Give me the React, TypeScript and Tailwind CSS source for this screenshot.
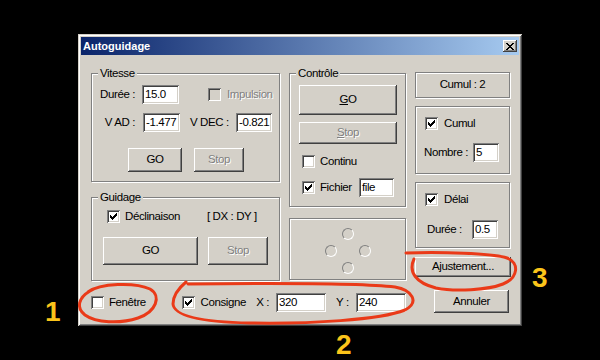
import React from 'react';

// classic win2k bevels
const RAISED =
  'bg-[#d4d0c8] shadow-[inset_-1px_-1px_#404040,inset_1px_1px_#fff,inset_-2px_-2px_#808080,inset_2px_2px_#d4d0c8]';
const SUNKEN = 'shadow-[inset_1px_1px_#808080,inset_-1px_-1px_#fff,inset_2px_2px_#404040,inset_-2px_-2px_#d4d0c8]';
const ETCHED = 'border border-[#808080] shadow-[1px_1px_0_#fff,inset_1px_1px_0_#fff]';
const DISABLED = 'text-[#808080] [text-shadow:1px_1px_0_#fff]';

function Check({ on = false, disabled = false }: { on?: boolean; disabled?: boolean }) {
  return (
    <div className={`w-[13px] h-[13px] shrink-0 ${SUNKEN} ${disabled ? 'bg-[#d4d0c8]' : 'bg-white'}`}>
      {on && (
        <svg width="13" height="13" viewBox="0 0 13 13" shapeRendering="crispEdges">
          <path
            fill="#000"
            d="M9 3h1v1h-1z M8 4h2v1h-2z M3 5h1v1h-1z M7 5h3v1h-3z M3 6h2v1h-2z M6 6h3v1h-3z M3 7h5v1h-5z M4 8h3v1h-3z M5 9h1v1h-1z"
          />
        </svg>
      )}
    </div>
  );
}

function Field({ value, className = '' }: { value: string; className?: string }) {
  return (
    <div className={`h-[19px] shrink-0 bg-white ${SUNKEN} pl-[3px] flex items-center leading-none ${className}`}>
      {value}
    </div>
  );
}

function Btn({
  children,
  className = '',
  disabled = false,
}: {
  children: React.ReactNode;
  className?: string;
  disabled?: boolean;
}) {
  return (
    <div className={`${RAISED} shrink-0 flex items-center justify-center ${disabled ? DISABLED : ''} ${className}`}>
      {children}
    </div>
  );
}

function Group({ label, className = '', children }: { label: string; className?: string; children: React.ReactNode }) {
  return (
    <fieldset className={`${ETCHED} min-w-0 ${className}`}>
      <legend className="ml-[6px] px-[2px] leading-[14px] h-[14px] bg-[#d4d0c8]">{label}</legend>
      {children}
    </fieldset>
  );
}

function Dot() {
  return (
    <span className="w-[12px] h-[12px] rounded-full border border-t-[#808080] border-l-[#808080] border-r-white border-b-white" />
  );
}

export default function App() {
  return (
    <div className="relative w-[600px] h-[360px] bg-black overflow-hidden pt-[34px] pl-[78px] font-['Liberation_Sans',Arial,sans-serif] text-[11.5px] tracking-[-0.4px] text-black">
      {/* Dialog */}
      <div className="w-[444px] h-[292px] p-[3px] bg-[#d4d0c8] flex flex-col shadow-[inset_1px_1px_#d4d0c8,inset_-1px_-1px_#404040,inset_2px_2px_#fff,inset_-2px_-2px_#808080]">
        {/* Title bar */}
        <div className="h-[18px] shrink-0 flex items-center justify-between pl-[2px] pr-[2px] bg-[linear-gradient(to_right,#0a246a,#a6caf0)]">
          <span className="text-white font-bold text-[11px] tracking-normal">Autoguidage</span>
          <Btn className="w-[14px] h-[12px]">
            <svg width="8" height="7" viewBox="0 0 8 7" shapeRendering="crispEdges">
              <path
                fill="#000"
                d="M0 0h2v1h-2z M6 0h2v1h-2z M1 1h2v1h-2z M5 1h2v1h-2z M2 2h4v1h-4z M3 3h2v1h-2z M2 4h4v1h-4z M1 5h2v1h-2z M5 5h2v1h-2z M0 6h2v1h-2z M6 6h2v1h-2z"
              />
            </svg>
          </Btn>
        </div>

        {/* Body */}
        <div className="flex-1 flex pl-[10px] pt-[11px]">
          <div className="flex flex-col w-[315px]">
            <div className="flex items-start">
              {/* Column 1 */}
              <div className="flex flex-col w-[189px]">
                <Group label="Vitesse" className="pb-[9px]">
                  <div className="mt-[5px] h-[19px] flex items-center">
                    <span className="w-[50px] text-right pr-[7px]">Durée :</span>
                    <Field value="15.0" className="w-[37px]" />
                    <div className="ml-[29px]">
                      <Check disabled />
                    </div>
                    <span className={`ml-[6px] ${DISABLED}`}>Impulsion</span>
                  </div>
                  <div className="mt-[9px] h-[19px] flex items-center">
                    <span className="w-[51px] text-right pr-[8px]">V AD :</span>
                    <Field value="-1.477" className="w-[37px]" />
                    <span className="ml-[10px] w-[46px]">V DEC :</span>
                    <Field value="-0.821" className="w-[36px]" />
                  </div>
                  <div className="mt-[16px] flex">
                    <Btn className="ml-[36px] w-[54px] h-[24px]">GO</Btn>
                    <Btn disabled className="ml-[12px] w-[50px] h-[24px]">
                      Stop
                    </Btn>
                  </div>
                </Group>

                <Group label="Guidage" className="mt-[8px] pb-[15px]">
                  <div className="mt-[6px] h-[13px] flex items-center">
                    <div className="ml-[15px]">
                      <Check on />
                    </div>
                    <span className="ml-[5px] w-[82px]">Déclinaison</span>
                    <span>[ DX : DY ]</span>
                  </div>
                  <div className="mt-[14px] flex">
                    <Btn className="ml-[11px] w-[95px] h-[28px]">GO</Btn>
                    <Btn disabled className="ml-[10px] w-[60px] h-[28px]">
                      Stop
                    </Btn>
                  </div>
                </Group>
              </div>

              {/* Column 2 */}
              <div className="ml-[9px] flex flex-col w-[117px]">
                <Group label="Contrôle" className="pb-[9px]">
                  <Btn className="mt-[5px] ml-[9px] w-[98px] h-[30px]">
                    <span>
                      <span className="underline">G</span>O
                    </span>
                  </Btn>
                  <Btn disabled className="mt-[7px] ml-[9px] w-[98px] h-[22px]">
                    <span>
                      <span className="underline">S</span>top
                    </span>
                  </Btn>
                  <div className="mt-[11px] h-[13px] flex items-center">
                    <div className="ml-[12px]">
                      <Check />
                    </div>
                    <span className="ml-[5px]">Continu</span>
                  </div>
                  <div className="mt-[10px] h-[19px] flex items-center">
                    <div className="ml-[12px]">
                      <Check on />
                    </div>
                    <span className="ml-[5px] w-[39px]">Fichier</span>
                    <Field value="file" className="w-[35px]" />
                  </div>
                </Group>

                {/* Joystick pad */}
                <div className={`mt-[11px] h-[62px] ${ETCHED} flex items-center justify-center pt-[3px]`}>
                  <div className="grid grid-cols-[17px_17px_17px] grid-rows-[17px_17px_17px] place-items-center">
                    <span />
                    <Dot />
                    <span />
                    <Dot />
                    <span />
                    <Dot />
                    <span />
                    <Dot />
                    <span />
                  </div>
                </div>
              </div>
            </div>

            {/* Bottom row */}
            <div className="mt-[12px] h-[19px] flex items-center">
              <Check />
              <span className="ml-[5px] w-[73px]">Fenêtre</span>
              <Check on />
              <span className="ml-[6px] w-[56px]">Consigne</span>
              <span className="w-[20px]">X :</span>
              <Field value="320" className="w-[50px]" />
              <span className="ml-[10px] w-[20px]">Y :</span>
              <Field value="240" className="w-[50px]" />
            </div>
          </div>

          {/* Column 3 */}
          <div className="ml-[9px] w-[95px] flex flex-col">
            <div className={`mt-[6px] h-[26px] ${ETCHED} flex items-center justify-center`}>Cumul : 2</div>

            <div className={`mt-[8px] h-[68px] ${ETCHED} pt-[10px]`}>
              <div className="h-[13px] flex items-center">
                <div className="ml-[9px]">
                  <Check on />
                </div>
                <span className="ml-[6px]">Cumul</span>
              </div>
              <div className="mt-[13px] h-[19px] flex items-center">
                <span className="ml-[8px] w-[49px]">Nombre :</span>
                <Field value="5" className="w-[26px]" />
              </div>
            </div>

            <div className={`mt-[8px] h-[66px] ${ETCHED} pt-[10px]`}>
              <div className="h-[13px] flex items-center">
                <div className="ml-[9px]">
                  <Check on />
                </div>
                <span className="ml-[6px]">Délai</span>
              </div>
              <div className="mt-[14px] h-[19px] flex items-center">
                <span className="ml-[11px] w-[45px]">Durée :</span>
                <Field value="0.5" className="w-[26px]" />
              </div>
            </div>

            <Btn className="mt-[9px] w-[96px] h-[20px]">Ajustement...</Btn>
            <Btn className="mt-[13px] ml-[19px] w-[75px] h-[23px]">Annuler</Btn>
          </div>
        </div>
      </div>

      {/* Annotations */}
      <svg
        className="absolute inset-0 pointer-events-none"
        width="600"
        height="360"
        viewBox="0 0 600 360"
        fill="none"
        stroke="#ea3a18"
        strokeWidth="3"
        strokeLinecap="round"
      >
        <path d="M88 292 C 100 283, 135 282, 150 289 C 162 296, 156 312, 138 318 C 120 324, 96 323, 85 315 C 76 308, 78 298, 90 291" />
        <path d="M186 282 C 180 287, 173 295, 173 304 C 174 316, 200 322, 250 323 C 310 324, 380 320, 405 310 C 420 302, 412 290, 395 287 C 360 283, 280 283, 188 284" />
        <path d="M406 253 C 440 252, 492 253, 507 258 C 520 263, 518 278, 503 284 C 488 290, 455 292, 436 288 C 416 283, 408 272, 414 259" />
      </svg>
      <span className="absolute left-[45px] top-[298px] text-[28px] leading-none font-bold text-[#fbc41a] tracking-normal">
        1
      </span>
      <span className="absolute left-[336px] top-[331px] text-[28px] leading-none font-bold text-[#fbc41a] tracking-normal">
        2
      </span>
      <span className="absolute left-[532px] top-[264px] text-[28px] leading-none font-bold text-[#fbc41a] tracking-normal">
        3
      </span>
    </div>
  );
}
